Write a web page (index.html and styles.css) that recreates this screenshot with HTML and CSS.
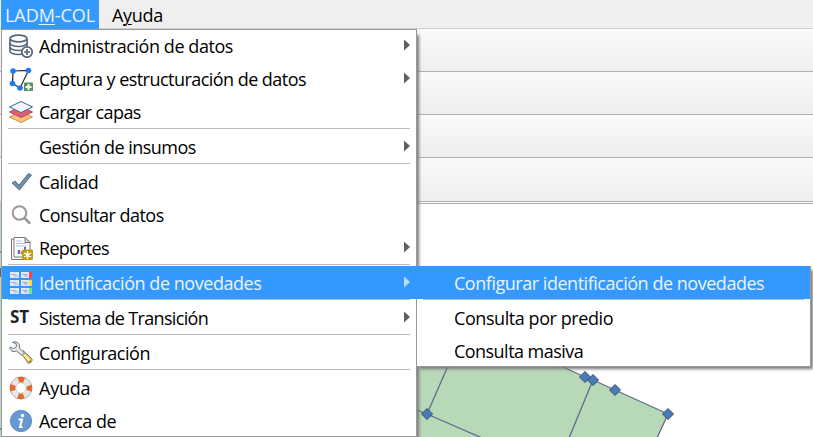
FILE: index.html
```html
<!DOCTYPE html>
<html lang="es">
<head>
<meta charset="utf-8">
<title>LADM-COL</title>
<link rel="stylesheet" href="styles.css">
</head>
<body>
<nav class="menubar"><span class="tab active">LAD<u>M</u>-COL</span><span class="tab help">A<u>y</u>uda</span></nav>
<div class="toolbar"></div><div class="toolbar"></div><div class="toolbar"></div><div class="toolbar last"></div>
<div class="gap"></div>
<svg class="map" viewBox="0 204 813 233">
  <path d="M0 204H417V300L555 363L585 377L593 380L615 390L668 414L657 438H0Z" fill="#b8d9b8"/>
  <path d="M417 204h396v140H417z" fill="#fff"/>
  <g fill="none" stroke="#606c8f" stroke-width="1.3">
    <path d="M530 352L585 377L593 380L615 390L668 414L657 438M593 380L569 438M448 366L427 414L482 438M417 410L427 414M0 252L3 253M0 429H3"/>
  </g>
  <path d="M0 268h2v9H0z" fill="#456b9b"/>
  <g fill="#477cb8" stroke="#3d4d63" stroke-width="1">
    <path id="n" d="M427 408.500l5.500 5.500-5.500 5.500-5.500-5.500z"/>
    <use href="#n" x="128" y="-52"/><use href="#n" x="158" y="-37"/><use href="#n" x="166" y="-34"/><use href="#n" x="188" y="-24"/><use href="#n" x="241"/>
  </g>
</svg>

<div class="menu main">
  <div class="item"><svg class="icon" viewBox="0 0 24 24"><g fill="#fff" stroke="#56677d" stroke-width="1.7"><path d="M1 5v12c0 2 4 3.500 8.500 3.500S18 19 18 17V5"/><path d="M1 9c0 2 4 3.500 8.500 3.500S18 11 18 9M1 13c0 2 4 3.500 8.500 3.500S18 15 18 13" fill="none"/><ellipse cx="9.500" cy="4.500" rx="8.500" ry="3.300"/><circle cx="18" cy="18" r="5.200"/><path d="M18 15v6M15 18h6"/></g></svg><span class="label t1">Administración de datos</span><i class="arrow"></i></div>
  <div class="item"><svg class="icon" viewBox="0 0 24 24"><path d="M4 4L19.500 3.500L11 21L3.500 16.500Z" fill="none" stroke="#222" stroke-width="1.2"/><g fill="#1f7bf5"><circle cx="4" cy="4" r="2.800"/><circle cx="19.500" cy="3.500" r="2.800"/><circle cx="3.500" cy="16.500" r="2.800"/><circle cx="11" cy="21" r="2.800"/></g><rect x="15" y="15.500" width="9" height="9" rx="1" fill="#579260"/><path d="M19.500 17v6M16.500 20h6" stroke="#fff" stroke-width="2"/></svg><span class="label t2">Captura y estructuración de datos</span><i class="arrow"></i></div>
  <div class="item"><svg class="icon" viewBox="0 0 24 24"><g stroke-width="1"><path d="M0.500 17L12 11l11.500 6L12 22.500z" fill="#fbc276" stroke="#c58b4d"/><path d="M0.500 12L12 6l11.500 6L12 17.500z" fill="#e75a76" stroke="#ad4a63"/><path d="M0.500 7L12 1.500L23.500 7L12 12.500z" fill="#f1f7fc" stroke="#39698b"/></g></svg><span class="label t3">Cargar capas</span></div>
  <div class="sep"></div>
  <div class="item"><span class="icon"></span><span class="label t4">Gestión de insumos</span><i class="arrow"></i></div>
  <div class="sep"></div>
  <div class="item"><svg class="icon" viewBox="0 0 24 24"><path d="M3 13l3-2 4 4L19.500 3.500 22.500 5 10.500 20z" fill="#6d8fa9" stroke="#55758e"/></svg><span class="label t5">Calidad</span></div>
  <div class="item"><svg class="icon" viewBox="0 0 24 24"><circle cx="10.500" cy="10" r="6.800" fill="none" stroke="#999" stroke-width="2"/><path d="M15.500 15l5 5" stroke="#999" stroke-width="2.500" stroke-linecap="round"/></svg><span class="label t6">Consultar datos</span></div>
  <div class="item"><svg class="icon" viewBox="0 0 24 24"><path d="M5 3H2.500v20.500H15" fill="none" stroke="#777"/><path d="M5 1.500h11l5 5v14.500H5z" fill="#fff" stroke="#777"/><path d="M16 1.500v5h5z" fill="#ddd" stroke="#777"/><path d="M7 5h6M7 7.500h10M7 10h11" stroke="#aebfec" stroke-width="1.200"/><path d="M10 18v-4" stroke="#5473bb" stroke-width="2.500"/><path d="M13 18v-3" stroke="#d56a60" stroke-width="2"/><path d="M16 17v-6" stroke="#5473bb" stroke-width="2"/><rect x="13" y="13.500" width="11" height="10.500" rx="1.500" fill="#c29d0b"/><path d="M18.500 15v8M15 17l7 4M15 21l7-4" stroke="#fff" stroke-width="1.300"/><circle cx="18.500" cy="19" r="1.700" fill="#fff"/></svg><span class="label t7">Reportes</span><i class="arrow"></i></div>
  <div class="sep"></div>
  <div class="item selected"><svg class="icon" viewBox="0 0 24 24"><g fill="#dfe8f7"><path d="M1 1h9v6H1zM12 1h11v6H12z"/><path d="M1 9h9v6H1zM12 9h11v6H12z"/><path d="M1 17h9v6H1zM12 17h11v6H12z"/></g><path d="M2.500 3.500h4M13.500 3.500h5M2.500 11.500h4M13.500 11.500h5M2.500 19.500h4M13.500 19.500h5M5 5h4M15 5h4M5 13h4M15 13h4M5 21h4M15 21h4" stroke="#a1abbd"/><path d="M20 1h3v6h-3z" fill="#ff4050"/><path d="M20 9h3v6h-3z" fill="#ffd454"/><path d="M20 17h3v6h-3z" fill="#69e994"/></svg><span class="label t8">Identificación de novedades</span><i class="arrow"></i></div>
  <div class="sep"></div>
  <div class="item"><span class="icon st">ST</span><span class="label t9">Sistema de Transición</span><i class="arrow"></i></div>
  <div class="sep"></div>
  <div class="item"><svg class="icon" viewBox="0 0 24 24"><path d="M12 11.500l2-2 9 8.500c1 1.500-2 5-4 4z" fill="#ead36d" stroke="#77704d"/><path d="M14 13l6.500 6.500" stroke="#fff3a8" stroke-width="1.300"/><circle cx="21" cy="20.500" r="1" fill="#77704d"/><path d="M3.500 1.500c4-2 8 1 7 5.500l5 5-2.500 2.500-5.500-4.500c-3 1.500-7 0-6.500-4l3.500 1.500 3-2-.5-3z" fill="#e0e4e4" stroke="#707777"/></svg><span class="label t10">Configuración</span></div>
  <div class="sep"></div>
  <div class="item"><svg class="icon" viewBox="0 0 24 24"><circle cx="12" cy="12" r="8.200" fill="none" stroke="#e6e6e6" stroke-width="5.200"/><circle cx="12" cy="12" r="11" fill="none" stroke="#b0b0b0" stroke-width="1"/><circle cx="12" cy="12" r="8.300" fill="none" stroke="#e2692f" stroke-width="5.800" stroke-dasharray="5.600 7.438" stroke-dashoffset="2.800"/><circle cx="12" cy="12" r="5.300" fill="#fff" stroke="#bbb" stroke-width=".7"/></svg><span class="label t11">Ayuda</span></div>
  <div class="item"><svg class="icon" viewBox="0 0 24 24"><circle cx="12" cy="12" r="10.700" fill="#6799cf" stroke="#5585bd" stroke-width=".8"/><circle cx="13.500" cy="6.500" r="1.700" fill="#fff"/><path d="M9.500 10.500h3.500l-2 7.500h2.500" fill="none" stroke="#fff" stroke-width="2"/></svg><span class="label t12">Acerca de</span></div>
</div>
<div class="menu sub">
  <div class="item selected"><span class="label s1">Configurar identificación de novedades</span></div>
  <div class="sep"></div>
  <div class="item"><span class="label s2">Consulta por predio</span></div>
  <div class="item"><span class="label s3">Consulta masiva</span></div>
</div>
</body>
</html>
```
FILE: styles.css
```css
* { box-sizing: border-box; }
body {
  margin: 0;
  width: 813px;
  height: 437px;
  overflow: hidden;
  background: #fff;
  color: #000;
  font: 18px/33px "Open Sans", "Noto Sans", sans-serif;
}
.menubar { display: flex; height: 29px; padding-left: 1px; background: #efefef; border-bottom: 1px solid #d0d0d0; line-height: 30px; }
.tab { height: 29px; white-space: nowrap; }
.active { width: 98px; padding-left: 4px; background: #3399ff; color: #eaf4ff; letter-spacing: -.05px; }
.help { margin-left: 13px; letter-spacing: -.3px; }
u { text-underline-offset: 2px; text-decoration-thickness: 1px; }
.toolbar { height: 43px; background: linear-gradient(#fafafa, #eee); border-bottom: 1px solid #b0b0b0; }
.last { height: 44px; }
.gap { height: 2px; background: #fafafa; border-bottom: 1px solid #b0b0b0; }
.map { display: block; width: 813px; height: 233px; }
.menu { position: absolute; background: #fff; }
.menu::after { content: ""; position: absolute; inset: 0; border: 1px solid #999; pointer-events: none; }
.main { left: 1px; top: 29px; width: 416px; height: 408px; box-shadow: 3px 5px 3px -1px #777; }
.sub { left: 416px; top: 266px; width: 395px; height: 101px; box-shadow: 3px 3px 3px -1px #777; }
.item { display: flex; align-items: center; height: 33px; padding-left: 8px; white-space: nowrap; }
.sub .item { padding-left: 38px; }
.selected { position: relative; z-index: 1; margin-left: 1px; padding-left: 7px; background: #3399ff; color: #eaf4ff; }
.sub .selected { margin: 0 1px 0 0; padding-left: 38px; }
.icon { flex: none; width: 24px; height: 24px; margin-right: 6px; }
.label { height: 33px; padding-top: 1px; }
.t1 { letter-spacing: -.43px; }
.t2 { letter-spacing: -.54px; }
.t3 { letter-spacing: -.57px; }
.t4 { letter-spacing: -.53px; }
.t5 { letter-spacing: -.45px; }
.t6 { letter-spacing: -.53px; }
.t7 { letter-spacing: -.72px; }
.t8 { letter-spacing: -.45px; }
.t9 { letter-spacing: -.67px; }
.t10 { letter-spacing: -.46px; }
.t11 { letter-spacing: -.25px; }
.t12 { letter-spacing: -.55px; }
.s1 { letter-spacing: -.47px; }
.s2 { letter-spacing: -.43px; }
.s3 { letter-spacing: -.54px; }
.st { color: #222; font: bold 17px/22px "Open Sans", sans-serif; padding-left: 1px; }
.arrow { width: 6px; height: 11px; margin: -1px 7px 0 auto; background: #606060; clip-path: polygon(0 0, 100% 50%, 0 100%); }
.selected .arrow { background: #b9dcff; }
.sep { height: 2px; margin: 0 7px; border-top: 1px solid #bdbdbd; }
```
